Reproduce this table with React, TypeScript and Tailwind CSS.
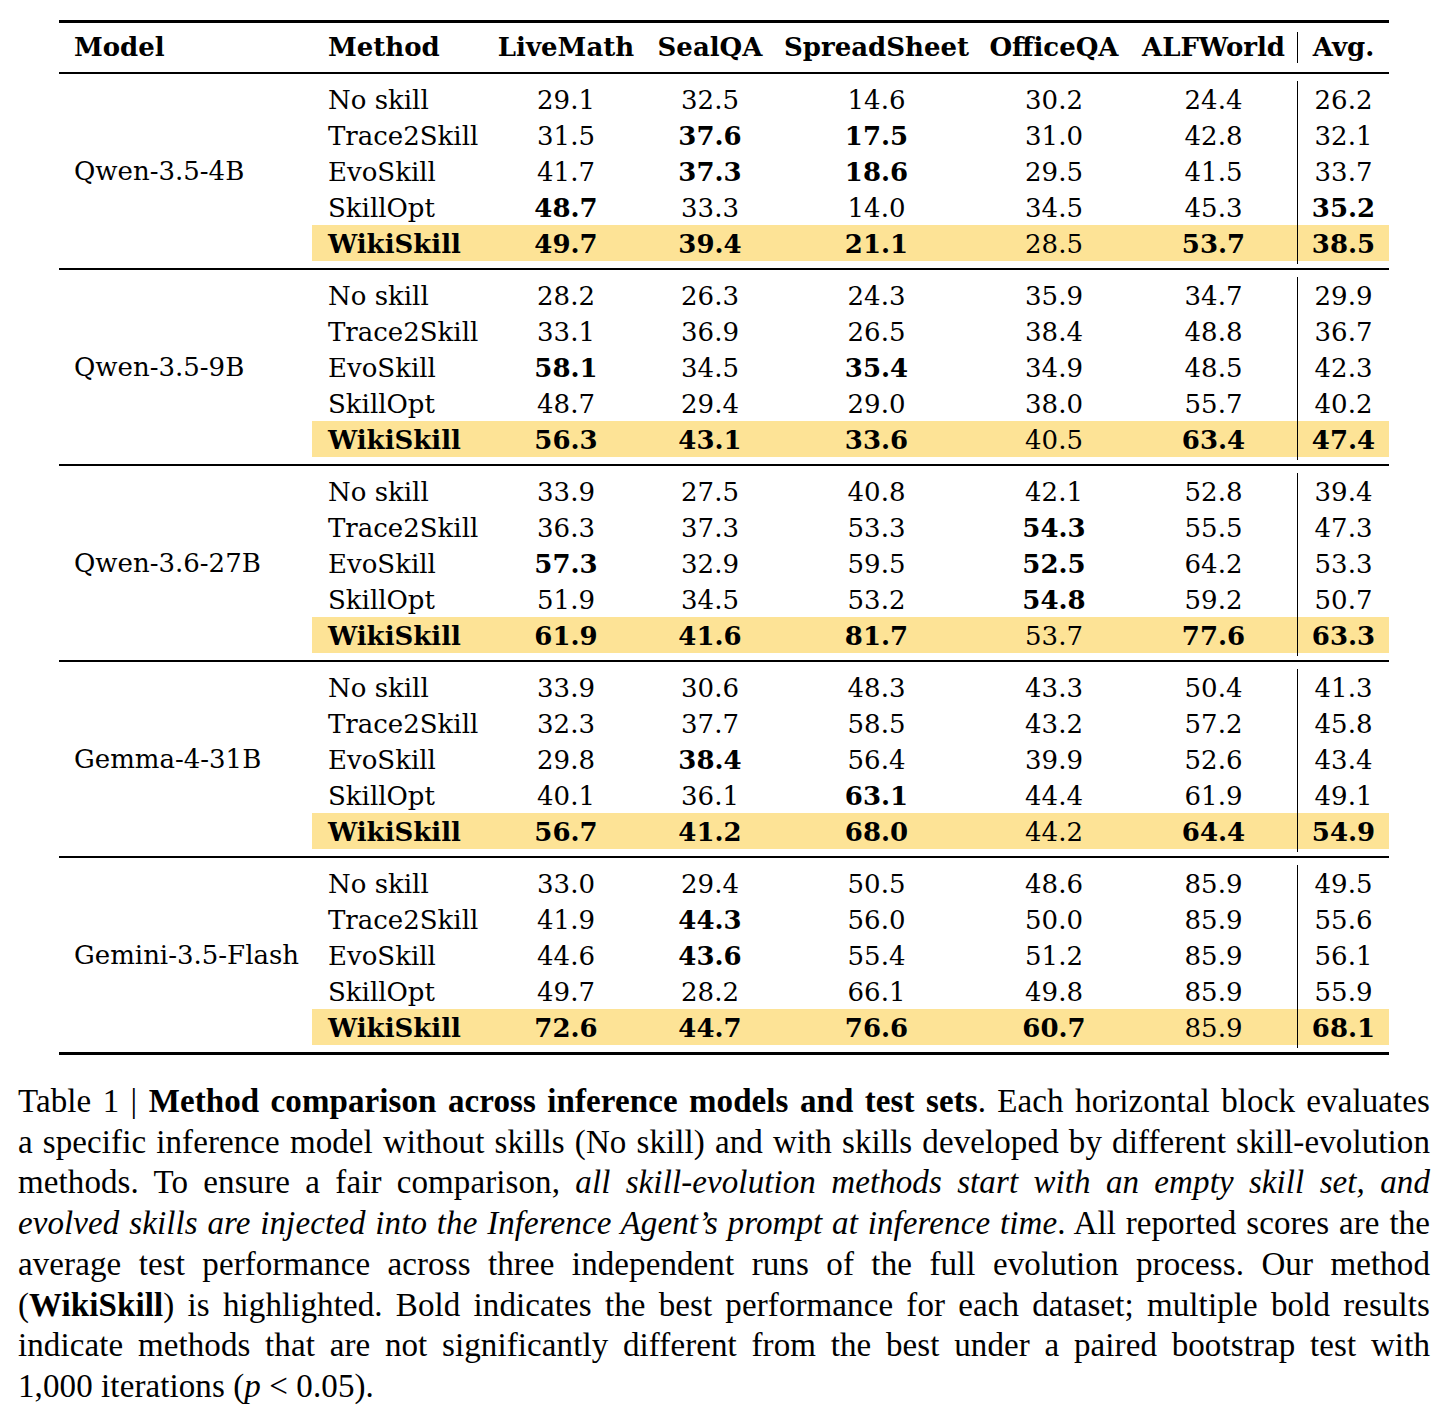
type Cell = { v: string; b?: boolean };

type Row = { method: string; cells: Cell[] };

type Group = { model: string; rows: Row[] };

// "*" marks a bold value
const parse = (s: string): Cell[] =>
  s.split(" ").map((t) => (t.startsWith("*") ? { v: t.slice(1), b: true } : { v: t }));

const methods = ["No skill", "Trace2Skill", "EvoSkill", "SkillOpt", "WikiSkill"];

const mk = (model: string, lines: string[]): Group => ({
  model,
  rows: lines.map((l, i) => ({ method: methods[i], cells: parse(l) })),
});

const groups: Group[] = [
  mk("Qwen-3.5-4B", [
    "29.1 32.5 14.6 30.2 24.4 26.2",
    "31.5 *37.6 *17.5 31.0 42.8 32.1",
    "41.7 *37.3 *18.6 29.5 41.5 33.7",
    "*48.7 33.3 14.0 34.5 45.3 *35.2",
    "*49.7 *39.4 *21.1 28.5 *53.7 *38.5",
  ]),
  mk("Qwen-3.5-9B", [
    "28.2 26.3 24.3 35.9 34.7 29.9",
    "33.1 36.9 26.5 38.4 48.8 36.7",
    "*58.1 34.5 *35.4 34.9 48.5 42.3",
    "48.7 29.4 29.0 38.0 55.7 40.2",
    "*56.3 *43.1 *33.6 40.5 *63.4 *47.4",
  ]),
  mk("Qwen-3.6-27B", [
    "33.9 27.5 40.8 42.1 52.8 39.4",
    "36.3 37.3 53.3 *54.3 55.5 47.3",
    "*57.3 32.9 59.5 *52.5 64.2 53.3",
    "51.9 34.5 53.2 *54.8 59.2 50.7",
    "*61.9 *41.6 *81.7 53.7 *77.6 *63.3",
  ]),
  mk("Gemma-4-31B", [
    "33.9 30.6 48.3 43.3 50.4 41.3",
    "32.3 37.7 58.5 43.2 57.2 45.8",
    "29.8 *38.4 56.4 39.9 52.6 43.4",
    "40.1 36.1 *63.1 44.4 61.9 49.1",
    "*56.7 *41.2 *68.0 44.2 *64.4 *54.9",
  ]),
  mk("Gemini-3.5-Flash", [
    "33.0 29.4 50.5 48.6 85.9 49.5",
    "41.9 *44.3 56.0 50.0 85.9 55.6",
    "44.6 *43.6 55.4 51.2 85.9 56.1",
    "49.7 28.2 66.1 49.8 85.9 55.9",
    "*72.6 *44.7 *76.6 *60.7 85.9 *68.1",
  ]),
];

const headers = ["LiveMath", "SealQA", "SpreadSheet", "OfficeQA", "ALFWorld"];

const rowCols = "grid grid-cols-[175px_158px_130px_203px_152px_167px_92px]";

const justifyLine = "whitespace-nowrap text-justify [text-align-last:justify]";

export default function App() {
  return (
    <div className="min-h-screen bg-white pt-5 text-black">
      <div className="ml-[59px] w-[1330px] font-['DejaVu_Serif',serif] text-[26px]">
        <div className="h-[3px] bg-black" />
        <div className="flex h-[49px] items-center font-bold">
          <div className="w-[253px] pl-[15px]">Model</div>
          <div className={`${rowCols} items-center`}>
            <div className="pl-4">Method</div>
            {headers.map((h) => (
              <div key={h} className="text-center">
                {h}
              </div>
            ))}
            <div className="flex h-[31px] items-center justify-center border-l border-black">Avg.</div>
          </div>
        </div>
        {groups.map((g) => (
          <div key={g.model}>
            <div className="h-[2px] bg-black" />
            <div className="flex py-[7px]">
              <div className="flex w-[253px] items-center pl-[15px]">{g.model}</div>
              <div>
                {g.rows.map((r) => {
                  const hl = r.method === "WikiSkill";
                  return (
                    <div key={r.method} className={`${rowCols} h-9 items-center ${hl ? "bg-[#fde396]" : ""}`}>
                      <div className={`pl-4 ${hl ? "font-bold" : ""}`}>{r.method}</div>
                      {r.cells.map((c, i) => (
                        <div
                          key={i}
                          className={`flex h-full items-center justify-center ${c.b ? "font-bold" : ""} ${
                            i === 5 ? "border-l border-black" : ""
                          }`}
                        >
                          {c.v}
                        </div>
                      ))}
                    </div>
                  );
                })}
              </div>
            </div>
          </div>
        ))}
        <div className="h-[3px] bg-black" />
      </div>

      <div className="ml-[18px] mr-[15px] mt-[26px] font-['Liberation_Serif',serif] text-[33px] leading-[40.7px] tracking-[0.1px]">
        <div className={justifyLine}>
          Table 1 | <b>Method comparison across inference models and test sets</b>. Each horizontal block evaluates
        </div>
        <div className={justifyLine}>
          a specific inference model without skills (No skill) and with skills developed by different skill-evolution
        </div>
        <div className={justifyLine}>
          methods. To ensure a fair comparison, <i>all skill-evolution methods start with an empty skill set, and</i>
        </div>
        <div className={justifyLine}>
          <i>evolved skills are injected into the Inference Agent’s prompt at inference time</i>. All reported scores are the
        </div>
        <div className={justifyLine}>
          average test performance across three independent runs of the full evolution process. Our method
        </div>
        <div className={justifyLine}>
          (<b>WikiSkill</b>) is highlighted. Bold indicates the best performance for each dataset; multiple bold results
        </div>
        <div className={justifyLine}>
          indicate methods that are not significantly different from the best under a paired bootstrap test with
        </div>
        <div className="whitespace-nowrap">
          1,000 iterations (<i>p</i> &lt; 0.05).
        </div>
      </div>
    </div>
  );
}
